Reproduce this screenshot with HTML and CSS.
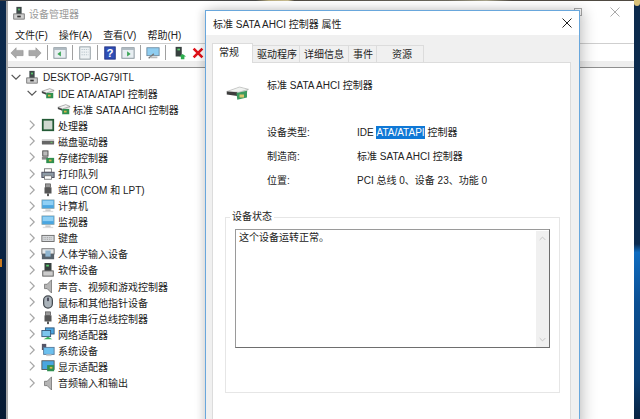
FILE: index.html
```html
<!DOCTYPE html>
<html lang="zh-CN">
<head>
<meta charset="utf-8">
<title>设备管理器</title>
<link rel="stylesheet" href="styles.css">
</head>
<body>
<svg class="defs" width="0" height="0" aria-hidden="true">
  <defs>
    <symbol id="chev-r" viewBox="0 0 16 16"><path d="M5.5 3l5 5-5 5" fill="none" stroke="#a6a6a6" stroke-width="1.4"/></symbol>
    <symbol id="chev-d" viewBox="0 0 16 16"><path d="M3 5.5l5 5 5-5" fill="none" stroke="#555" stroke-width="1.4"/></symbol>
    <symbol id="card" viewBox="0 0 16 16"><path d="M1 6l9-3 5 2v2l-4 1v5l-5 1-1-5-4-1z" fill="#d9dcd9"/><path d="M1 6l9-3 5 2-9 3z" fill="#f2f2f2" stroke="#777" stroke-width=".6"/><path d="M1 6v2l5 2V8z" fill="#444"/><rect x="6" y="8" width="8" height="6" fill="#2f8f4f"/><rect x="8" y="10" width="3" height="2" fill="#d9b54a"/></symbol>
    <symbol id="computer" viewBox="0 0 16 16"><rect x="1" y="1" width="14" height="10" fill="#4aa6e0" stroke="#9aa" stroke-width=".8"/><rect x="2" y="2" width="12" height="5" fill="#8fd0f5"/><rect x="5" y="12" width="6" height="1.5" fill="#bbb"/><rect x="2" y="13.5" width="12" height="1.5" fill="#ddd"/></symbol>
    <symbol id="speaker" viewBox="0 0 16 16"><path d="M4 6h3l5-5v15l-5-5H4z" fill="#b5b5b5" stroke="#666" stroke-width=".8"/></symbol>
    <symbol id="plug" viewBox="0 0 16 16"><rect x="5" y="1" width="6" height="4" fill="#999" stroke="#444" stroke-width=".7"/><rect x="4" y="5" width="8" height="7" fill="#555"/><rect x="7" y="12" width="2" height="3" fill="#444"/></symbol>
    <symbol id="tower" viewBox="0 0 16 16"><rect x="5" y="1" width="6" height="8" fill="#3f4a4a"/><rect x="7" y="3" width="2" height="2" fill="#5bd16f"/><rect x="2" y="9" width="12" height="6" fill="#cfcfcf" stroke="#555" stroke-width=".8"/><rect x="6" y="11" width="4" height="2" fill="#333"/></symbol>
  </defs>
</svg>

<div class="desk">
  <div class="edge edge-l"><span class="spot"></span></div>
  <div class="edge edge-r"><span class="sun"></span></div>

  <section class="manager">
    <header class="mgr-title">
      <svg class="ico"><use href="#tower"/></svg>
      <span>设备管理器</span>
      <i class="maxbtn"></i>
      <svg class="close close-dim" viewBox="0 0 10 10"><path d="M.5.5l9 9M9.5.5l-9 9"/></svg>
    </header>
    <nav class="menu">
      <span>文件(F)</span><span>操作(A)</span><span>查看(V)</span><span>帮助(H)</span>
    </nav>
    <div class="toolbar">
      <svg class="tb" viewBox="0 0 16 16"><path d="M1 8l6-6v3h8v6H7v3z" fill="#a9a9a9" stroke="#8d8d8d" stroke-width=".6"/></svg>
      <svg class="tb" viewBox="0 0 16 16"><path d="M15 8L9 2v3H1v6h8v3z" fill="#a9a9a9" stroke="#8d8d8d" stroke-width=".6"/></svg>
      <i class="sep"></i>
      <svg class="tb" viewBox="0 0 16 16"><rect x="1" y="2" width="14" height="12" fill="#e8eef2" stroke="#7d8a92"/><rect x="1" y="2" width="14" height="2.5" fill="#aeb9c0"/><path d="M9 6v6L5 9z" fill="#3aa655"/></svg>
      <i class="sep"></i>
      <svg class="tb" viewBox="0 0 16 16"><rect x="2" y="1" width="12" height="14" fill="#eef2f4" stroke="#8a959c"/><path d="M4 4h8M4 7h8M4 10h8" stroke="#b5c0c7" stroke-dasharray="1.5 1"/></svg>
      <i class="sep"></i>
      <svg class="tb" viewBox="0 0 16 16"><rect x="2" y="1" width="12" height="14" fill="#2f4fb5" stroke="#1f2f80"/><text class="q" x="8" y="12.5" text-anchor="middle">?</text></svg>
      <svg class="tb" viewBox="0 0 16 16"><rect x="1" y="2" width="14" height="12" fill="#e8eef2" stroke="#7d8a92"/><rect x="1" y="2" width="14" height="2.5" fill="#aeb9c0"/><path d="M7 6v6l4-3z" fill="#3aa655"/></svg>
      <i class="sep"></i>
      <svg class="tb" viewBox="0 0 16 16"><rect x="1" y="2" width="14" height="9" fill="#8fcdf0" stroke="#6b8aa0"/><path d="M3 14l6-5" stroke="#777" stroke-width="1.5"/><rect x="5" y="12" width="8" height="2" fill="#bbb"/></svg>
      <i class="sep"></i>
      <svg class="tb tb-scan" viewBox="0 0 16 16"><rect x="3" y="1" width="7" height="11" fill="#37403f"/><rect x="5" y="3" width="3" height="2" fill="#5bd16f"/><path d="M11 9l4 3h-2v3H9v-3H7z" fill="#2eae4f"/></svg>
      <svg class="tb" viewBox="0 0 16 16"><path d="M3 3l10 10M13 3L3 13" stroke="#e0121a" stroke-width="3"/></svg>
    </div>
    <div class="band"></div>
    <ul class="tree">
      <li class="row root"><svg class="chev"><use href="#chev-d"/></svg><svg class="ico"><use href="#tower"/></svg><span>DESKTOP-AG79ITL</span></li>
      <li class="row l1"><svg class="chev"><use href="#chev-d"/></svg><svg class="ico"><use href="#card"/></svg><span>IDE ATA/ATAPI 控制器</span></li>
      <li class="row l2"><svg class="ico"><use href="#card"/></svg><span>标准 SATA AHCI 控制器</span></li>
      <li class="row l1"><svg class="chev"><use href="#chev-r"/></svg><svg class="ico" viewBox="0 0 16 16"><rect x="2" y="2" width="12" height="12" fill="#cfd8cf" stroke="#235a35" stroke-width="2"/></svg><span>处理器</span></li>
      <li class="row l1"><svg class="chev"><use href="#chev-r"/></svg><svg class="ico" viewBox="0 0 16 16"><rect x="1" y="7" width="14" height="5" rx="1" fill="#666"/><rect x="1" y="6" width="14" height="2" fill="#ccc"/><rect x="11" y="9" width="2" height="1" fill="#6d6"/></svg><span>磁盘驱动器</span></li>
      <li class="row l1"><svg class="chev"><use href="#chev-r"/></svg><svg class="ico" viewBox="0 0 16 16"><rect x="2" y="1" width="6" height="6" fill="#bbb" stroke="#444"/><rect x="1" y="8" width="7" height="3" fill="#888"/><rect x="6" y="9" width="9" height="6" fill="#2f8f4f"/><rect x="9" y="11" width="3" height="2" fill="#d9b54a"/></svg><span>存储控制器</span></li>
      <li class="row l1"><svg class="chev"><use href="#chev-r"/></svg><svg class="ico" viewBox="0 0 16 16"><rect x="4" y="2" width="8" height="4" fill="#fff" stroke="#777"/><rect x="1" y="6" width="14" height="6" fill="#8d9aa5" stroke="#445"/><rect x="4" y="10" width="8" height="4" fill="#fff" stroke="#777"/></svg><span>打印队列</span></li>
      <li class="row l1"><svg class="chev"><use href="#chev-r"/></svg><svg class="ico"><use href="#plug"/></svg><span>端口 (COM 和 LPT)</span></li>
      <li class="row l1"><svg class="chev"><use href="#chev-r"/></svg><svg class="ico"><use href="#computer"/></svg><span>计算机</span></li>
      <li class="row l1"><svg class="chev"><use href="#chev-r"/></svg><svg class="ico"><use href="#computer"/></svg><span>监视器</span></li>
      <li class="row l1"><svg class="chev"><use href="#chev-r"/></svg><svg class="ico" viewBox="0 0 16 16"><rect x="1" y="5" width="14" height="7" fill="#d6d9dc" stroke="#666"/><path d="M3 7.5h10M3 9.5h10" stroke="#999" stroke-dasharray="1 1"/></svg><span>键盘</span></li>
      <li class="row l1"><svg class="chev"><use href="#chev-r"/></svg><svg class="ico" viewBox="0 0 16 16"><rect x="1" y="2" width="14" height="6" fill="#e4e8ea" stroke="#666"/><rect x="1" y="8" width="14" height="6" fill="#56626c"/><rect x="5" y="4" width="6" height="7" fill="#8fb5d0"/></svg><span>人体学输入设备</span></li>
      <li class="row l1"><svg class="chev"><use href="#chev-r"/></svg><svg class="ico" viewBox="0 0 16 16"><rect x="4" y="0" width="8" height="9" fill="#37403f"/><rect x="6" y="2" width="3" height="2" fill="#5bd16f"/><rect x="2" y="9" width="12" height="6" fill="#ccc" stroke="#555"/></svg><span>软件设备</span></li>
      <li class="row l1"><svg class="chev"><use href="#chev-r"/></svg><svg class="ico"><use href="#speaker"/></svg><span>声音、视频和游戏控制器</span></li>
      <li class="row l1"><svg class="chev"><use href="#chev-r"/></svg><svg class="ico" viewBox="0 0 16 16"><rect x="3" y="1" width="10" height="14" rx="5" fill="#aab3ba" stroke="#444a50" stroke-width="1.4"/><rect x="7" y="3" width="2" height="4" fill="#445"/></svg><span>鼠标和其他指针设备</span></li>
      <li class="row l1"><svg class="chev"><use href="#chev-r"/></svg><svg class="ico"><use href="#plug"/></svg><span>通用串行总线控制器</span></li>
      <li class="row l1"><svg class="chev"><use href="#chev-r"/></svg><svg class="ico" viewBox="0 0 16 16"><rect x="5" y="1" width="10" height="7" fill="#4aa6e0" stroke="#357"/><rect x="1" y="4" width="10" height="7" fill="#7cc6ee" stroke="#357"/><path d="M3 14h10l-5-3z" fill="#3ab45a"/></svg><span>网络适配器</span></li>
      <li class="row l1"><svg class="chev"><use href="#chev-r"/></svg><svg class="ico" viewBox="0 0 16 16"><rect x="1" y="1" width="5" height="7" fill="#556"/><rect x="3" y="5" width="12" height="8" fill="#6cc0ee" stroke="#579"/><rect x="6" y="13" width="6" height="2" fill="#ccc"/></svg><span>系统设备</span></li>
      <li class="row l1"><svg class="chev"><use href="#chev-r"/></svg><svg class="ico" viewBox="0 0 16 16"><rect x="1" y="2" width="14" height="10" fill="#4aa6e0" stroke="#555"/><rect x="7" y="7" width="8" height="7" fill="#2f8f4f"/><rect x="10" y="9" width="3" height="2" fill="#d9b54a"/></svg><span>显示适配器</span></li>
      <li class="row l1"><svg class="chev"><use href="#chev-r"/></svg><svg class="ico"><use href="#speaker"/></svg><span>音频输入和输出</span></li>
    </ul>
  </section>

  <section class="dialog">
    <header class="dlg-title">
      <span>标准 SATA AHCI 控制器 属性</span>
      <svg class="close" viewBox="0 0 10 10"><path d="M.5.5l9 9M9.5.5l-9 9"/></svg>
    </header>
    <div class="dlg-body">
      <div class="tabs">
        <span class="tab on">常规</span><span class="tab t2">驱动程序</span><span class="tab t3">详细信息</span><span class="tab t4">事件</span><span class="tab t5">资源</span>
      </div>
      <div class="page">
        <div class="head">
          <svg class="big" viewBox="0 0 32 24"><path d="M1 10l17-6 12 3-2 5-10 3z" fill="#dfe3df"/><path d="M1 10l17-6 12 3-13 4z" fill="#f0f2f0" stroke="#8a8a8a" stroke-width=".5"/><path d="M1 10v4l14 2v-5z" fill="#3d3d3d"/><path d="M14 12l14-3v9l-13 3z" fill="#3c9a5f"/><rect x="18" y="14" width="6" height="4" fill="#d9c46a"/></svg>
          <span>标准 SATA AHCI 控制器</span>
        </div>
        <dl class="props">
          <dt>设备类型:</dt><dd>IDE <mark>ATA/ATAPI</mark> 控制器</dd>
          <dt>制造商:</dt><dd>标准 SATA AHCI 控制器</dd>
          <dt>位置:</dt><dd>PCI 总线 0、设备 23、功能 0</dd>
        </dl>
        <fieldset class="status">
          <legend>设备状态</legend>
          <div class="box">
            <p>这个设备运转正常。</p>
            <div class="scroll">
              <svg viewBox="0 0 10 6"><path d="M1 5l4-4 4 4" fill="none" stroke="#c4c4c4" stroke-width="1.4"/></svg>
              <svg viewBox="0 0 10 6"><path d="M1 1l4 4 4-4" fill="none" stroke="#c4c4c4" stroke-width="1.4"/></svg>
            </div>
          </div>
        </fieldset>
      </div>
    </div>
  </section>
</div>
</body>
</html>
```
FILE: styles.css
```css
* { box-sizing: border-box; }
html, body { margin: 0; padding: 0; }
body {
  width: 640px; height: 419px; overflow: hidden;
  font-family: "Liberation Sans", "Noto Sans CJK SC", sans-serif;
  font-size: 10px; color: #222;
}
.defs { position: absolute; }
.desk {
  position: relative; width: 640px; height: 419px; overflow: hidden;
  display: flex; justify-content: space-between;
  background: linear-gradient(90deg, #3c3f44 0, #4a4a48 40%, #b9ad80 42%, #c9bd90 45%, #4f4a42 46%, #6d6a5f 70%, #a9a58c 76%, #4f4a42 80%);
}
.edge { position: relative; width: 6px; height: 100%; margin-top: 1px; background: linear-gradient(#0c2a4c, #0a2546 50%, #061a33); }
.edge-r { background: linear-gradient(#0c2a4c, #0b2b50 58%, #0f6cc0 60%, #0b4f93 72%, #0a3f75 90%, #08223f); }
.spot { position: absolute; left: 0; top: 258px; width: 2px; height: 8px; background: #c8791e; }
.sun { position: absolute; left: 0; top: -1px; width: 6px; height: 6px; background: #d9c27a; border-radius: 0 0 6px 6px; }
.manager {
  position: absolute; left: 6px; top: 1px; width: 628px; height: 418px;
  background: #fff; display: flex; flex-direction: column;
  border-left: 2px solid #a8a8a8;
}
.mgr-title { position: relative; height: 26px; padding: 0 0 2px 4px; display: flex; align-items: center; gap: 3px; color: #9a9a9a; flex: none; }
.mgr-title .ico { width: 14px; height: 14px; }
.mgr-title .close-dim { margin-left: auto; margin-right: 14px; margin-top: -3px; stroke: #aaa; }
.maxbtn { position: absolute; left: 566px; top: 7px; width: 8px; height: 8px; border: 1px solid #aaa; }
.menu { height: 16px; display: flex; gap: 11px; padding: 0 0 2px 7px; align-items: center; flex: none; }
.toolbar { height: 18px; flex: none; background: #fff; border-top: 1px solid #cfcfcf; display: flex; align-items: center; padding-left: 2px; }
.band { height: 7px; flex: none; background: #eeeeee; border-bottom: 1px solid #8f8f8f; }
.tb { width: 14px; height: 14px; flex: none; }
.tb + .tb { margin-left: 4px; }
.tb-scan { margin-left: 2px; }
.q { font: bold 13px "Liberation Sans", sans-serif; fill: #fff; }
.sep { width: 1px; height: 15px; background: #a0a0a0; margin: 0 5px; flex: none; }
.tree { list-style: none; margin: 0; padding: 1px 0 0 0; }
.row { height: 16.08px; display: flex; align-items: center; gap: 2px; white-space: nowrap; }
.row.root { padding-left: 1px; }
.row.l1 { padding-left: 17px; }
.row.l2 { padding-left: 49px; }
.chev { width: 14px; height: 14px; flex: none; }
.ico { width: 14px; height: 14px; flex: none; }
.row .ico { margin-right: 1px; }
.row.root .ico { margin-right: 2px; }
.row.l2 .ico { margin-right: 0; }

.dialog {
  position: absolute; left: 205px; top: 10px; width: 375px; height: 420px;
  background: #fff; border: 1px solid #69a7dc;
  box-shadow: 5px 0 12px rgba(0,0,0,.18), -3px 0 8px rgba(0,0,0,.12);
  display: flex; flex-direction: column;
}
.dlg-title { height: 24px; flex: none; display: flex; align-items: center; justify-content: space-between; padding: 0 7px 0 7px; }
.close { width: 10px; height: 10px; fill: none; stroke: #222; stroke-width: 1; }
.dlg-body { flex: 1; background: #f0f0f0; padding: 8px 8px 0 6px; display: flex; flex-direction: column; }
.tabs { display: flex; height: 19px; align-items: flex-end; flex: none; }
.tab { height: 17px; line-height: 17px; background: #f0f0f0; border: 1px solid #dcdcdc; border-bottom: 0; margin-left: -1px; padding-left: 4px; }
.t2 { width: 48px; }
.t3 { width: 50px; }
.t4 { width: 29px; }
.t5 { width: 48px; padding-left: 15px; }
.tab.on { height: 20px; width: 41px; background: #fff; padding: 0 6px; margin-left: 0; line-height: 18px; position: relative; z-index: 1; margin-bottom: -1px; }
.page { flex: 1; background: #fff; border: 1px solid #dcdcdc; padding: 14px 10px 0 12px; }
.head { display: flex; gap: 17px; height: 32px; }
.big { width: 24px; height: 18px; margin: 7px 0 0 1px; flex: none; }
.head span { line-height: 16px; margin-top: 1px; }
.props { display: grid; grid-template-columns: 90px 1fr; grid-auto-rows: 24px; margin: 16px 0 0 42px; }
.props dt, .props dd { margin: 0; line-height: 16px; }
mark { display: inline-block; line-height: 13px; background: #0f78d6; color: #fff; }
.status { margin: 12px 0 0 0; padding: 0 9px; border: 1px solid #e6e6e6; height: 184px; width: 335px; }
.status legend { padding: 0 2px; margin-left: -5px; line-height: 16px; }
.box { height: 119px; margin-top: 4px; border: 1px solid #9a9a9a; border-bottom-color: #6e6e6e; border-right-color: #6e6e6e; display: flex; justify-content: space-between; }
.box p { margin: 1px 0 0 3px; line-height: 14px; }
.scroll { width: 13px; margin: 1px 0 0; background: #f0f0f0; display: flex; flex-direction: column; justify-content: space-between; align-items: center; padding: 5px 0; }
.scroll svg { width: 7px; height: 5px; }
```
